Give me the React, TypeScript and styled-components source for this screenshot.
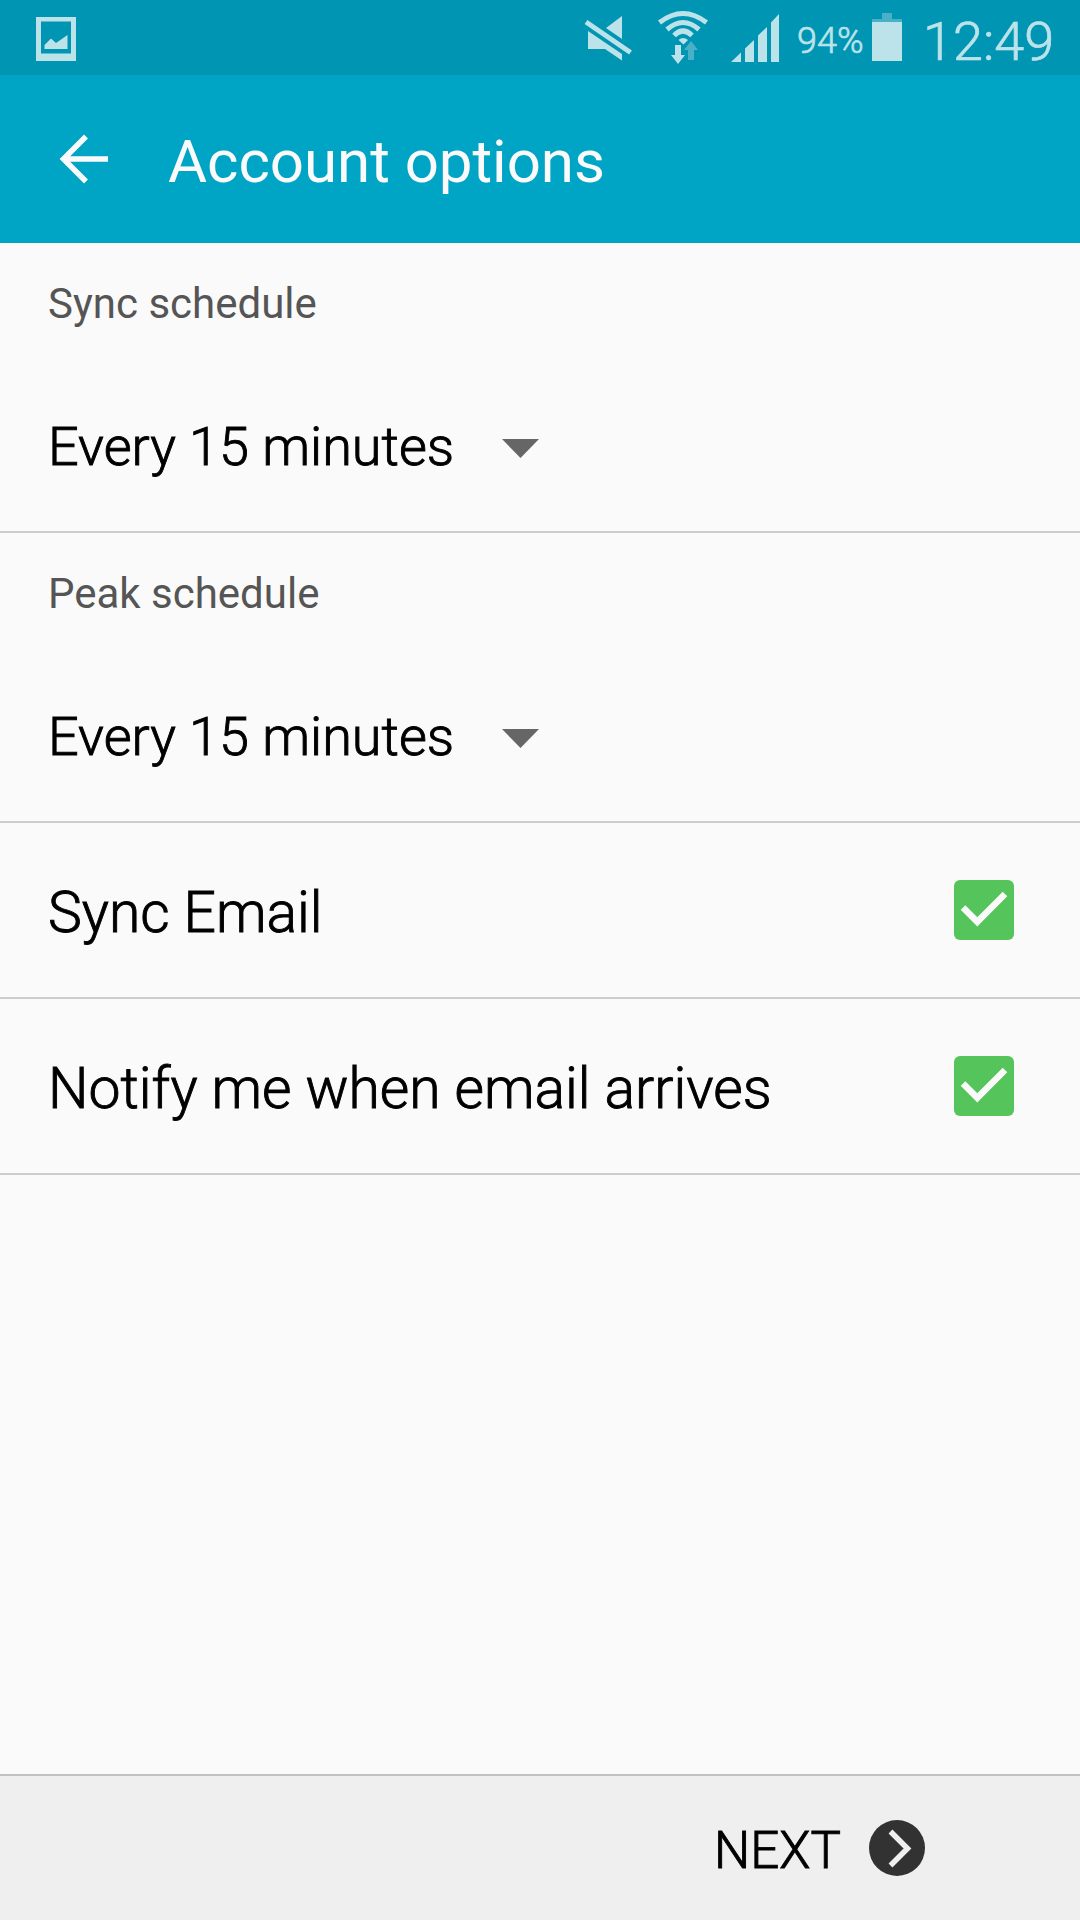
import React from "react";
import styled, { createGlobalStyle } from "styled-components";

const Global = createGlobalStyle`
  html, body { margin: 0; padding: 0; background: #fafafa; }
  * { box-sizing: border-box; }
`;

const Screen = styled.div`
  width: 1080px;
  height: 1920px;
  display: flex;
  flex-direction: column;
  background: #fafafa;
  color: #000;
  font-family: Roboto, "Liberation Sans", sans-serif;
  overflow: hidden;
`;

const StatusBar = styled.div`
  height: 75px;
  flex: none;
  display: flex;
  align-items: flex-start;
  justify-content: space-between;
  background: #0095b3;
  color: #bce3ea;
`;

const StatusGroup = styled.div`
  display: flex;
  height: 75px;
`;

const StatusText = styled.span<{ $size: number; $line: number; $width: number }>`
  flex: none;
  width: ${(p) => p.$width}px;
  font-size: ${(p) => p.$size}px;
  line-height: ${(p) => p.$line}px;
  font-weight: 300;
  -webkit-text-stroke: 0.7px currentColor;
  white-space: nowrap;
`;

const Drawing = styled.svg`
  display: block;
  flex: none;
`;

const Header = styled.header`
  height: 168px;
  flex: none;
  display: flex;
  align-items: flex-start;
  background: #00a5c6;
  color: #fafafa;
`;

const BackButton = styled.button`
  width: 168px;
  height: 168px;
  padding: 0;
  border: 0;
  background: none;
  color: inherit;
`;

const Title = styled.h1`
  margin: 0;
  font-size: 60px;
  font-weight: 400;
  line-height: 173px;
  letter-spacing: -0.03px;
`;

const Options = styled.main`
  flex: 1;
`;

const ScheduleSection = styled.section`
  height: 290px;
  padding-left: 48px;
  border-bottom: 2px solid #cdcdcd;
`;

const Caption = styled.div`
  padding-top: 30px;
  font-size: 42px;
  line-height: 62px;
  color: #555;
`;

const Dropdown = styled.div`
  display: flex;
  align-items: center;
  justify-content: space-between;
  width: 491px;
  padding-top: 70px;
`;

const DropdownValue = styled.span`
  font-size: 54px;
  font-weight: 300;
  -webkit-text-stroke: 0.9px currentColor;
  line-height: 84px;
`;

const CheckRow = styled.label`
  height: 176px;
  display: flex;
  align-items: center;
  justify-content: space-between;
  padding: 0 66px 0 48px;
  border-bottom: 2px solid #cdcdcd;
`;

const RowLabel = styled.span`
  font-size: 57px;
  font-weight: 300;
  -webkit-text-stroke: 0.9px currentColor;
  line-height: 72px;
  padding-top: 5px;
`;

const BottomBar = styled.footer`
  height: 146px;
  flex: none;
  display: flex;
  align-items: flex-start;
  justify-content: flex-end;
  padding-right: 155px;
  background: #efefef;
  border-top: 2px solid #c2c2c2;
`;

const NextButton = styled.button`
  display: flex;
  align-items: flex-start;
  gap: 28px;
  padding: 0;
  border: 0;
  background: none;
  color: #000;
  font-family: inherit;
  font-size: 51px;
  font-weight: 300;
  -webkit-text-stroke: 0.9px currentColor;
  line-height: 149px;
`;

function StatusIcons() {
  return (
    <Drawing width="227" height="75" viewBox="570 0 227 75" fill="#bce3ea">
      <path d="M622 16V39L606 28zM588 31L622 54V60.500L605 49H588z" />
      <path d="M586 22L630.500 52.500" stroke="#bce3ea" strokeWidth="5" />
      <g fill="none" stroke="#bce3ea" strokeWidth="5">
        <path d="M659.500 22.500Q683 4.500 706.500 22.500" />
        <path d="M667 29.500Q683 15.500 699 29.500" />
        <path d="M674 35.500Q683 26.500 692 35.500" />
      </g>
      <path d="M678.500 40Q683 36 688 40L683.500 44.500z" />
      <path d="M675 45H681V55H685L678 64L671 55H675z" />
      <path d="M688 60V50H684L691 41L698 50H694V60z" fill="#49b1c7" />
      <path d="M731 62L741 52.500V62zM745 62V48.500L754 40V62zM758 62V35.500L767 27V62zM771 62V22.500L779 14V62z" />
    </Drawing>
  );
}

function Checkbox() {
  return (
    <Drawing width="60" height="60" viewBox="0 0 60 60">
      <rect width="60" height="60" rx="6" fill="#55c45a" />
      <path d="M9 27.500L23.300 41.800L51 14" fill="none" stroke="#fafafa" strokeWidth="6.500" />
    </Drawing>
  );
}

function Schedule({ caption, value }: { caption: string; value: string }) {
  return (
    <ScheduleSection>
      <Caption>{caption}</Caption>
      <Dropdown>
        <DropdownValue>{value}</DropdownValue>
        <Drawing width="37" height="21" viewBox="0 -2 37 21">
          <path d="M0 0H37L18.500 19z" fill="#666" />
        </Drawing>
      </Dropdown>
    </ScheduleSection>
  );
}

export default function App() {
  return (
    <>
      <Global />
      <Screen>
        <StatusBar>
          <StatusGroup>
            <Drawing width="90" height="75" viewBox="0 0 90 75" fill="#bce3ea">
              <path fillRule="evenodd" d="M36 17H76V61H36zM41 21.500V53.500H71V21.500z" />
              <path d="M44.500 49V45L51 38.500L56 43L67.500 35V49z" />
            </Drawing>
          </StatusGroup>
          <StatusGroup>
            <StatusIcons />
            <StatusText $size={36} $line={82} $width={75}>94%</StatusText>
            <Drawing width="51" height="75" viewBox="0 0 51 75">
              <path d="M10 13H20V19H30V22H0V19H10z" fill="#49b1c7" />
              <path d="M0 22H30V61H0z" fill="#bce3ea" />
            </Drawing>
            <StatusText $size={54} $line={83} $width={157}>12:49</StatusText>
          </StatusGroup>
        </StatusBar>
        <Header>
          <BackButton aria-label="Back">
            <Drawing width="168" height="168" viewBox="0 75 168 168">
              <path d="M86 136.500L63.500 159L86 181.500M64 159H108" fill="none" stroke="#fafafa" strokeWidth="5.500" />
            </Drawing>
          </BackButton>
          <Title>Account options</Title>
        </Header>
        <Options>
          <Schedule caption="Sync schedule" value="Every 15 minutes" />
          <Schedule caption="Peak schedule" value="Every 15 minutes" />
          <CheckRow>
            <RowLabel>Sync Email</RowLabel>
            <Checkbox />
          </CheckRow>
          <CheckRow>
            <RowLabel>Notify me when email arrives</RowLabel>
            <Checkbox />
          </CheckRow>
        </Options>
        <BottomBar>
          <NextButton>
            <span>NEXT</span>
            <Drawing width="56" height="144" viewBox="0 0 56 144">
              <circle cx="28" cy="72" r="28" fill="#323232" />
              <path d="M21.500 55.500L38.500 72.500L21.500 89.500" fill="none" stroke="#efefef" strokeWidth="5.500" />
            </Drawing>
          </NextButton>
        </BottomBar>
      </Screen>
    </>
  );
}
